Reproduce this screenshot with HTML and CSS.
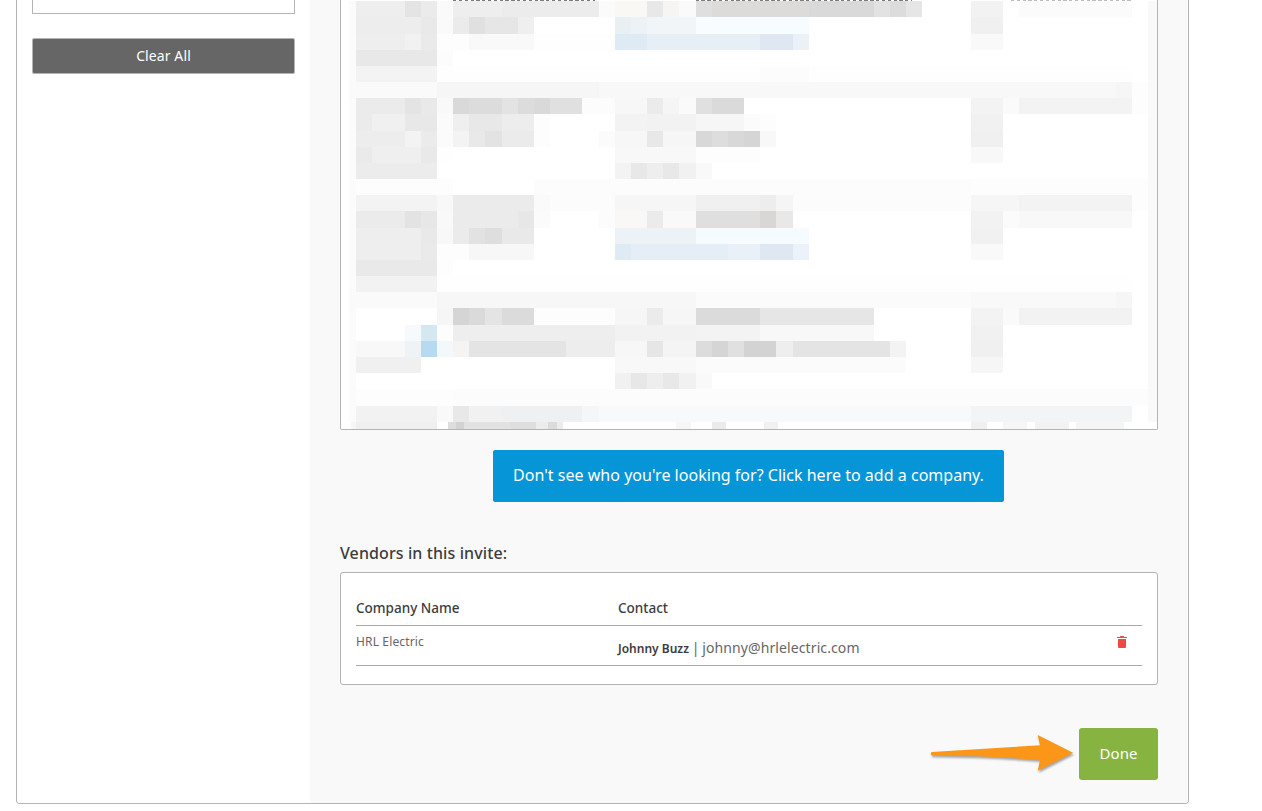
FILE: index.html
```html
<!DOCTYPE html>
<html lang="en">
<head>
<meta charset="utf-8">
<title>Vendors in this invite</title>
<link rel="stylesheet" href="styles.css">
</head>
<body>
<div class="card">
  <aside class="sidebar">
    <div class="search-box"></div>
    <button class="clear-btn" type="button">Clear All</button>
  </aside>
  <main class="panel">
    <div class="results">
      <svg class="mosaic" viewBox="-0.93 -0.05 50.46 26.6" width="816" height="431" aria-hidden="true" shape-rendering="crispEdges">
        <rect class="fill" x="49" y="0" width="0.6" height="26" fill="#f9f9f9"/>
        <rect class="fill" x="-0.43" y="0" width="0.43" height="26" fill="#fbfbfb"/>
        <g>
          <rect x="0" width="3" fill="#eeeeee"/><rect x="3" width="1" fill="#e4e4e4"/><rect x="4" width="1" fill="#ebebeb"/><rect x="5" width="1" fill="#fafafa"/><rect x="6" width="3" fill="#eeeeee"/><rect x="9" width="6" fill="#ececec"/><rect x="15" width="1" fill="#fbfbfb"/><rect x="16" width="2" fill="#f9f8f5"/><rect x="18" width="1" fill="#e8e8e8"/><rect x="19" width="1" fill="#f6f5f3"/><rect x="20" width="1" fill="#fafafa"/><rect x="21" width="1" fill="#dfdfdf"/><rect x="22" width="6" fill="#dcdbd9"/><rect x="28" width="4" fill="#d9d9d9"/><rect x="32" width="1" fill="#e2e2e2"/><rect x="33" width="1" fill="#dcdcdc"/><rect x="34" width="1" fill="#e6e6e6"/><rect x="38" width="2" fill="#f2f2f2"/><rect x="41" width="7" fill="#fbfbfb"/>
        </g>
        <g transform="translate(0 1)">
          <rect x="0" width="4" fill="#ededed"/><rect x="4" width="1" fill="#e9e9e9"/><rect x="5" width="1" fill="#fafafa"/><rect x="6" width="1" fill="#ebebeb"/><rect x="7" width="1" fill="#e0e0e0"/><rect x="8" width="2" fill="#e6e6e6"/><rect x="10" width="1" fill="#efefef"/><rect x="16" width="1" fill="#e8f0f4"/><rect x="17" width="1" fill="#edf2f7"/><rect x="18" width="3" fill="#f1f5f8"/><rect x="21" width="7" fill="#f6fcff"/><rect x="38" width="2" fill="#f0f0f0"/>
        </g>
        <g transform="translate(0 2)">
          <rect x="0" width="3" fill="#eeeeee"/><rect x="3" width="1" fill="#f1f1f1"/><rect x="4" width="1" fill="#eaeaea"/><rect x="5" width="2" fill="#fdfdfd"/><rect x="7" width="4" fill="#f9f9f9"/><rect x="11" width="5" fill="#fefefe"/><rect x="16" width="2" fill="#deebf4"/><rect x="18" width="7" fill="#e6eef6"/><rect x="25" width="2" fill="#dfe8f2"/><rect x="27" width="1" fill="#ebf1f6"/><rect x="38" width="2" fill="#f9f9f9"/>
        </g>
        <g transform="translate(0 3)">
          <rect x="0" width="5" fill="#e8e8e8"/><rect x="5" width="1" fill="#fcfcfc"/>
        </g>
        <g transform="translate(0 4)">
          <rect x="0" width="5" fill="#f3f3f3"/><rect x="5" width="20" fill="#fefefe"/><rect x="25" width="3" fill="#fcfcfc"/><rect x="28" width="20" fill="#fefefe"/>
        </g>
        <g transform="translate(0 5)">
          <rect x="-0.43" width="5.43" fill="#fafafa"/><rect x="5" width="10" fill="#f6f6f6"/><rect x="15" width="32" fill="#f8f8f8"/><rect x="47" width="1" fill="#f6f6f6"/><rect x="48" width="1" fill="#fdfdfd"/>
        </g>
        <g transform="translate(0 6)">
          <rect x="0" width="3" fill="#ebebeb"/><rect x="3" width="1" fill="#e4e4e4"/><rect x="4" width="1" fill="#e9e9e9"/><rect x="5" width="1" fill="#f9f9f9"/><rect x="6" width="1" fill="#d9d9d9"/><rect x="7" width="2" fill="#dcdcdc"/><rect x="9" width="1" fill="#e3e3e3"/><rect x="10" width="1" fill="#dcdcdc"/><rect x="11" width="1" fill="#d9d9d9"/><rect x="12" width="2" fill="#e0e0e0"/><rect x="14" width="2" fill="#fcfcfc"/><rect x="16" width="2" fill="#f7f7f7"/><rect x="18" width="1" fill="#ebebeb"/><rect x="19" width="1" fill="#f5f5f5"/><rect x="20" width="1" fill="#fafafa"/><rect x="21" width="1" fill="#e0e0e0"/><rect x="22" width="2" fill="#dadada"/><rect x="38" width="2" fill="#f3f3f3"/><rect x="40" width="1" fill="#fafafa"/><rect x="41" width="7" fill="#f3f3f3"/><rect x="48" width="1" fill="#fdfdfd"/>
        </g>
        <g transform="translate(0 7)">
          <rect x="0" width="1" fill="#ebebeb"/><rect x="1" width="2" fill="#f0f0f0"/><rect x="3" width="2" fill="#e8e8e8"/><rect x="5" width="1" fill="#fbfbfb"/><rect x="6" width="1" fill="#efefef"/><rect x="7" width="2" fill="#e8e8e8"/><rect x="9" width="2" fill="#ededed"/><rect x="11" width="1" fill="#fdfdfd"/><rect x="16" width="2" fill="#f3f3f3"/><rect x="18" width="3" fill="#f2f2f2"/><rect x="21" width="3" fill="#f6f6f6"/><rect x="24" width="1" fill="#fbfbfb"/><rect x="25" width="1" fill="#fdfdfd"/><rect x="38" width="2" fill="#f1f1f1"/>
        </g>
        <g transform="translate(0 8)">
          <rect x="0" width="3" fill="#ededed"/><rect x="3" width="1" fill="#f3f3f3"/><rect x="4" width="1" fill="#ebebeb"/><rect x="5" width="1" fill="#fbfbfb"/><rect x="6" width="1" fill="#f3f3f3"/><rect x="7" width="1" fill="#e9e9e9"/><rect x="8" width="1" fill="#e3e3e3"/><rect x="9" width="2" fill="#ebebeb"/><rect x="11" width="1" fill="#fdfdfd"/><rect x="15" width="1" fill="#fbfbfb"/><rect x="16" width="2" fill="#f7f7f7"/><rect x="18" width="1" fill="#e8e8e8"/><rect x="19" width="2" fill="#f6f6f6"/><rect x="21" width="1" fill="#d8d8d8"/><rect x="22" width="1" fill="#dddddd"/><rect x="23" width="1" fill="#d8d8d8"/><rect x="24" width="1" fill="#d5d5d5"/><rect x="25" width="1" fill="#f8f8f8"/><rect x="38" width="2" fill="#f0f0f0"/>
        </g>
        <g transform="translate(0 9)">
          <rect x="0" width="1" fill="#eaeaea"/><rect x="1" width="3" fill="#efefef"/><rect x="4" width="1" fill="#e9e9e9"/><rect x="5" width="1" fill="#fefefe"/><rect x="16" width="5" fill="#f8f8f8"/><rect x="21" width="4" fill="#fdfdfd"/><rect x="38" width="2" fill="#f8f8f8"/>
        </g>
        <g transform="translate(0 10)">
          <rect x="0" width="5" fill="#ececec"/><rect x="16" width="1" fill="#f3f3f3"/><rect x="17" width="1" fill="#e8e8e8"/><rect x="18" width="1" fill="#eeeeee"/><rect x="19" width="1" fill="#e8e8e8"/><rect x="20" width="1" fill="#f1f1f1"/><rect x="21" width="1" fill="#f9f9f9"/>
        </g>
        <g transform="translate(0 11)">
          <rect x="0" width="6" fill="#fdfdfd"/><rect x="11" width="27" fill="#fcfcfc"/><rect x="38" width="11" fill="#fdfdfd"/>
        </g>
        <g transform="translate(0 12)">
          <rect x="0" width="5" fill="#f3f3f3"/><rect x="5" width="1" fill="#f8f8f8"/><rect x="6" width="5" fill="#ebebeb"/><rect x="11" width="1" fill="#fafafa"/><rect x="12" width="4" fill="#fcfcfc"/><rect x="16" width="5" fill="#f6f6f6"/><rect x="21" width="4" fill="#f0f0f0"/><rect x="25" width="1" fill="#ededed"/><rect x="26" width="1" fill="#f5f5f5"/><rect x="27" width="11" fill="#fcfcfc"/><rect x="38" width="3" fill="#f6f6f6"/><rect x="41" width="7" fill="#f3f3f3"/><rect x="48" width="1" fill="#fdfdfd"/>
        </g>
        <g transform="translate(0 13)">
          <rect x="0" width="3" fill="#ebebeb"/><rect x="3" width="1" fill="#e3e3e3"/><rect x="4" width="1" fill="#e7e7e7"/><rect x="5" width="1" fill="#f9f9f9"/><rect x="6" width="4" fill="#ebebeb"/><rect x="10" width="1" fill="#e7e7e7"/><rect x="11" width="1" fill="#fbfbfb"/><rect x="15" width="1" fill="#fcfcfc"/><rect x="16" width="2" fill="#f9f8f6"/><rect x="18" width="1" fill="#ebebeb"/><rect x="19" width="2" fill="#f9f9f9"/><rect x="21" width="4" fill="#dfdfdf"/><rect x="25" width="1" fill="#d8d7d5"/><rect x="26" width="1" fill="#e8e8e8"/><rect x="38" width="2" fill="#f2f2f2"/><rect x="40" width="1" fill="#fbfbfb"/><rect x="41" width="7" fill="#f8f8f8"/>
        </g>
        <g transform="translate(0 14)">
          <rect x="0" width="4" fill="#eeeeee"/><rect x="4" width="1" fill="#e9e9e9"/><rect x="5" width="1" fill="#f8f8f8"/><rect x="6" width="1" fill="#ebebeb"/><rect x="7" width="1" fill="#e2e2e2"/><rect x="8" width="1" fill="#dedede"/><rect x="9" width="2" fill="#e9e9e9"/><rect x="16" width="5" fill="#edf2f6"/><rect x="21" width="7" fill="#f6fbff"/><rect x="38" width="2" fill="#f1f1f1"/>
        </g>
        <g transform="translate(0 15)">
          <rect x="0" width="4" fill="#eeeeee"/><rect x="4" width="1" fill="#eaeaea"/><rect x="5" width="2" fill="#fdfdfd"/><rect x="7" width="4" fill="#f7f7f7"/><rect x="16" width="1" fill="#deebf5"/><rect x="17" width="6" fill="#e5eef6"/><rect x="23" width="2" fill="#e9f0f7"/><rect x="25" width="2" fill="#dfe8f2"/><rect x="27" width="1" fill="#ecf2fa"/><rect x="38" width="2" fill="#f9f9f9"/>
        </g>
        <g transform="translate(0 16)">
          <rect x="0" width="5" fill="#e9e9e9"/><rect x="5" width="1" fill="#fdfdfd"/>
        </g>
        <g transform="translate(0 17)">
          <rect x="0" width="5" fill="#f2f2f2"/><rect x="5" width="43" fill="#fefefe"/>
        </g>
        <g transform="translate(0 18)">
          <rect x="-0.43" width="5.43" fill="#fafafa"/><rect x="5" width="16" fill="#f7f7f7"/><rect x="21" width="17" fill="#fbfbfb"/><rect x="38" width="9" fill="#f9f9f9"/><rect x="47" width="1" fill="#f6f6f6"/>
        </g>
        <g transform="translate(0 19)">
          <rect x="5" width="1" fill="#f6f6f6"/><rect x="6" width="1" fill="#d5d5d5"/><rect x="7" width="1" fill="#dadada"/><rect x="8" width="1" fill="#e4e4e4"/><rect x="9" width="2" fill="#dbdbdb"/><rect x="11" width="5" fill="#fdfdfd"/><rect x="16" width="2" fill="#f6f6f6"/><rect x="18" width="1" fill="#ebebeb"/><rect x="19" width="2" fill="#f6f6f6"/><rect x="21" width="4" fill="#dbdbdb"/><rect x="25" width="7" fill="#e6e6e6"/><rect x="38" width="2" fill="#f3f3f3"/><rect x="40" width="1" fill="#fafafa"/><rect x="41" width="7" fill="#f2f2f2"/>
        </g>
        <g transform="translate(0 20)">
          <rect x="3" width="1" fill="#f6fafd"/><rect x="4" width="1" fill="#d5e7f0"/><rect x="5" width="1" fill="#fdfdfd"/><rect x="6" width="10" fill="#eeeeee"/><rect x="16" width="5" fill="#f2f2f2"/><rect x="21" width="4" fill="#f3f3f3"/><rect x="25" width="7" fill="#f8f8f8"/><rect x="38" width="2" fill="#f1f1f1"/>
        </g>
        <g transform="translate(0 21)">
          <rect x="0" width="3" fill="#f8f8f8"/><rect x="3" width="1" fill="#eef3f7"/><rect x="4" width="1" fill="#b7daf0"/><rect x="5" width="1" fill="#f3f8fc"/><rect x="6" width="1" fill="#f5f4f2"/><rect x="7" width="6" fill="#e4e4e4"/><rect x="13" width="3" fill="#ededed"/><rect x="16" width="2" fill="#f7f7f7"/><rect x="18" width="1" fill="#e6e6e6"/><rect x="19" width="2" fill="#f4f4f4"/><rect x="21" width="1" fill="#dcdcdc"/><rect x="22" width="1" fill="#d5d5d5"/><rect x="23" width="1" fill="#e0e0e0"/><rect x="24" width="2" fill="#d3d3d3"/><rect x="26" width="1" fill="#eeeeee"/><rect x="27" width="6" fill="#e4e4e4"/><rect x="33" width="1" fill="#f3f3f3"/><rect x="38" width="2" fill="#f0f0f0"/>
        </g>
        <g transform="translate(0 22)">
          <rect x="0" width="4" fill="#f0f0f0"/><rect x="16" width="5" fill="#f8f8f8"/><rect x="21" width="13" fill="#fbfbfb"/><rect x="38" width="2" fill="#f6f6f6"/>
        </g>
        <g transform="translate(0 23)">
          <rect x="16" width="1" fill="#f1f1f1"/><rect x="17" width="1" fill="#e7e7e7"/><rect x="18" width="1" fill="#eeeeee"/><rect x="19" width="1" fill="#e8e8e8"/><rect x="20" width="1" fill="#f1f1f1"/><rect x="21" width="1" fill="#f9f9f9"/>
        </g>
        <g transform="translate(0 24)">
          <rect x="0" width="6" fill="#fdfdfd"/><rect x="6" width="43" fill="#fcfcfc"/>
        </g>
        <g transform="translate(0 25)">
          <rect x="0" width="5" fill="#f2f2f2"/><rect x="5" width="1" fill="#f9f9f9"/><rect x="6" width="1" fill="#e8e8e8"/><rect x="7" width="2" fill="#f1f1f1"/><rect x="9" width="5" fill="#eff0f1"/><rect x="14" width="1" fill="#f5f6f8"/><rect x="15" width="23" fill="#f8f9fb"/><rect x="38" width="10" fill="#f3f4f6"/>
        </g>
        <g transform="translate(0 26)">
          <rect x="-0.3" width="0.3" fill="#f6f6f6"/><rect x="0" width="5" fill="#efefef"/><rect x="5.7" width="0.5" fill="#dddddd"/><rect x="6.2" width="0.5" fill="#d2d2d2"/><rect x="6.7" width="2.8" fill="#e2e2e2"/><rect x="9.500" width="1.6" fill="#dedede"/><rect x="11.1" width="0.8" fill="#ececec"/><rect x="11.9" width="0.5" fill="#dbdbdb"/><rect x="12.4" width="0.4" fill="#ececec"/><rect x="19.8" width="0.9" fill="#f6f6f6"/><rect x="22" width="0.9" fill="#ebebeb"/><rect x="25.2" width="0.9" fill="#f1f1f1"/><rect x="38" width="1" fill="#f0f0f0"/><rect x="40" width="1.5" fill="#f6f6f6"/><rect x="42" width="2.1" fill="#f2f2f2"/><rect x="44.5" width="3" fill="#f5f5f5"/>
        </g>
        <line class="clipped-text" x1="6" x2="14.8" y1="-0.02" y2="-0.02"/>
        <line class="clipped-text" x1="21" x2="34.4" y1="-0.02" y2="-0.02"/>
        <line class="clipped-text clipped-text-light" x1="40.5" x2="47.9" y1="-0.02" y2="-0.02"/>
      </svg>
    </div>

    <div class="add-row">
      <button class="add-btn" type="button">Don't see who you're looking for? Click here to add a company.</button>
    </div>

    <h2 class="vendors-title">Vendors in this invite:</h2>
    <section class="vendors">
      <div class="vendors-head">
        <div>Company Name</div>
        <div>Contact</div>
      </div>
      <div class="vendors-row">
        <div class="company">HRL Electric</div>
        <div class="contact"><strong>Johnny Buzz</strong> | johnny@hrlelectric.com</div>
        <svg class="trash" viewBox="0 0 10 12" width="10" height="12" aria-hidden="true"><path d="M3.4 0h3.2l.5 1H10v1H0V1h2.9zM1 3h8v8a1 1 0 0 1-1 1H2a1 1 0 0 1-1-1z"/></svg>
      </div>
    </section>

    <footer class="actions">
      <svg class="arrow" viewBox="0 0 150 44" width="150" height="44" aria-hidden="true"><path d="M1.500 19 110 12.300 107.700 2 143 19.700 107.700 37.700 110 27Q60 23 1.500 22.300Q0 20.600 1.500 19z"/></svg>
      <button class="done-btn" type="button">Done</button>
    </footer>
  </main>
</div>
</body>
</html>
```

FILE: styles.css
```css
* { box-sizing: border-box; }

html, body {
  margin: 0;
  height: 811px;
  overflow: hidden;
  background: #fff;
}

body {
  font-family: "Noto Sans", "Open Sans", sans-serif;
  color: #3c3c3c;
}

button {
  font-family: inherit;
  cursor: pointer;
}

.card {
  display: flex;
  width: 1173px;
  height: 804px;
  margin-left: 16px;
  border: 1px solid #b4b4b4;
  border-top: none;
  border-radius: 0 0 4px 4px;
  overflow: hidden;
}

.sidebar {
  flex: none;
  width: 293px;
  padding: 0 15px;
  background: #fff;
}

.search-box {
  height: 14px;
  border: 1px solid #b4b4b4;
  border-top: none;
  background: #fff;
}

.clear-btn {
  display: block;
  width: 100%;
  height: 36px;
  margin-top: 24px;
  padding: 0 0 2px;
  border: 1px solid #b4b4b4;
  border-radius: 2px;
  background: #666;
  color: #fff;
  font-size: 14px;
  letter-spacing: 0.1px;
}

.panel {
  flex: 1;
  padding: 0 30px;
  background: #f9f9f9;
}

.results {
  width: 818px;
  height: 430px;
  border: 1px solid #b4b4b4;
  border-top: none;
  border-radius: 0 0 2px 2px;
  background: #fff;
  overflow: hidden;
}

.mosaic {
  display: block;
}

.mosaic rect:not(.fill) {
  height: 1px;
}

.clipped-text {
  stroke: #777;
  stroke-width: 0.06;
  stroke-dasharray: 0.2 0.16;
}

.clipped-text-light {
  stroke: #bbb;
}

.add-row {
  display: flex;
  justify-content: center;
  margin-top: 20px;
  padding-right: 1px;
}

.add-btn {
  width: 511px;
  height: 52px;
  padding: 0 0 2px;
  border: none;
  border-radius: 2px;
  background: #0696d7;
  color: #fff;
  font-size: 16px;
  letter-spacing: 0.02px;
}

.vendors-title {
  margin: 40px 0 8px;
  font-size: 16px;
  font-weight: 500;
  line-height: 22px;
  letter-spacing: 0.1px;
  color: #3c3c3c;
}

.vendors {
  width: 818px;
  height: 113px;
  padding: 0 15px;
  border: 1px solid #b4b4b4;
  border-radius: 3px;
  background: #fff;
}

.vendors-head,
.vendors-row {
  display: grid;
  grid-template-columns: 262px 1fr auto;
  border-bottom: 1px solid #aaa;
}

.vendors-head {
  height: 53px;
  padding-top: 25px;
  font-size: 13.5px;
  font-weight: 500;
  line-height: 20px;
}

.vendors-row {
  position: relative;
  height: 40px;
  align-items: start;
}

.company {
  padding-top: 7px;
  font-size: 12px;
  line-height: 17px;
  letter-spacing: 0.15px;
  color: #666;
}

.contact {
  padding-top: 12px;
  font-size: 14px;
  line-height: 19px;
  letter-spacing: 0.1px;
  word-spacing: -1px;
  color: #666;
}

.contact strong {
  font-size: 12px;
  font-weight: 600;
  letter-spacing: 0;
  word-spacing: 0;
  color: #3c3c3c;
}

.trash {
  margin: 10px 15px 0 0;
  fill: #ee4a44;
}

.actions {
  position: relative;
  display: flex;
  justify-content: flex-end;
  margin-top: 43px;
}

.arrow {
  position: absolute;
  left: 590px;
  top: 5px;
  fill: #fb9618;
  filter: drop-shadow(1px 2px 1px rgba(0, 0, 0, 0.35));
}

.done-btn {
  width: 79px;
  height: 52px;
  padding: 0 0 2px;
  border: none;
  border-radius: 3px;
  background: #87b340;
  color: #fff;
  font-size: 15px;
  letter-spacing: 0.1px;
}
```
